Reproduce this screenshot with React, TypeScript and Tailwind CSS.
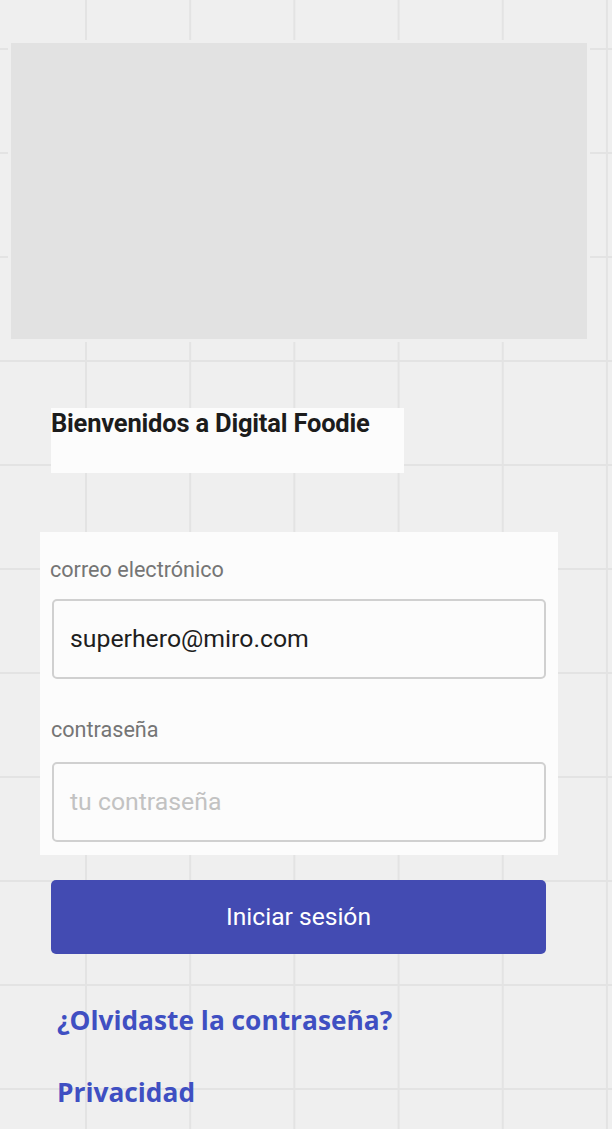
import React from "react";

export default function App() {
  return (
    <div
      className="w-[612px] h-[1129px] overflow-hidden bg-[#efefef] bg-[linear-gradient(to_right,#e3e3e3_2px,transparent_2px),linear-gradient(to_bottom,#e3e3e3_2px,transparent_2px)] bg-[size:104.2px_104px] bg-[position:85px_48px] flex flex-col"
      style={{ fontFamily: "Roboto, 'Noto Sans', sans-serif" }}
    >
      <div className="mt-[43px] ml-[11px] w-[576px] h-[296px] bg-[#e2e2e2] shadow-[0_0_0_3px_#efefef]" />

      <div className="mt-[69px] ml-[51px] w-[353px] h-[65px] bg-[#fcfcfc]">
        <h1 className="text-[25.5px] leading-[30px] font-bold text-[#1c1c1c] tracking-[-0.2px]">
          Bienvenidos a Digital Foodie
        </h1>
      </div>

      <div className="mt-[59px] ml-[40px] w-[518px] h-[323px] bg-[#fcfcfc] pt-[25px] px-[12px] flex flex-col">
        <label className="-ml-[2px] text-[21.6px] leading-[26px] text-[#757575]">correo electrónico</label>
        <div className="mt-[16px] h-[80px] w-[494px] border-2 border-[#d0d0d0] rounded-[5px] flex items-center pl-[16px]">
          <span className="text-[24.8px] text-[#1e1e1e]">superhero@miro.com</span>
        </div>
        <label className="mt-[38px] -ml-[1px] text-[21.6px] leading-[26px] text-[#757575]">contraseña</label>
        <div className="mt-[19px] h-[80px] w-[494px] border-2 border-[#d0d0d0] rounded-[5px] flex items-center pl-[16px]">
          <span className="text-[24.8px] text-[#c2c2c2]">tu contraseña</span>
        </div>
      </div>

      <button className="mt-[25px] ml-[51px] w-[495px] h-[74px] bg-[#434bb2] rounded-[5px] text-white text-[24.6px] flex items-center justify-center">
        Iniciar sesión
      </button>

      <div
        className="ml-[57px] mt-[48px] flex flex-col gap-[36px] text-[#3f4fc2] font-bold text-[26.3px] leading-[36px]"
        style={{ fontFamily: "'Open Sans', sans-serif" }}
      >
        <span>¿Olvidaste la contraseña?</span>
        <span>Privacidad</span>
      </div>
    </div>
  );
}
